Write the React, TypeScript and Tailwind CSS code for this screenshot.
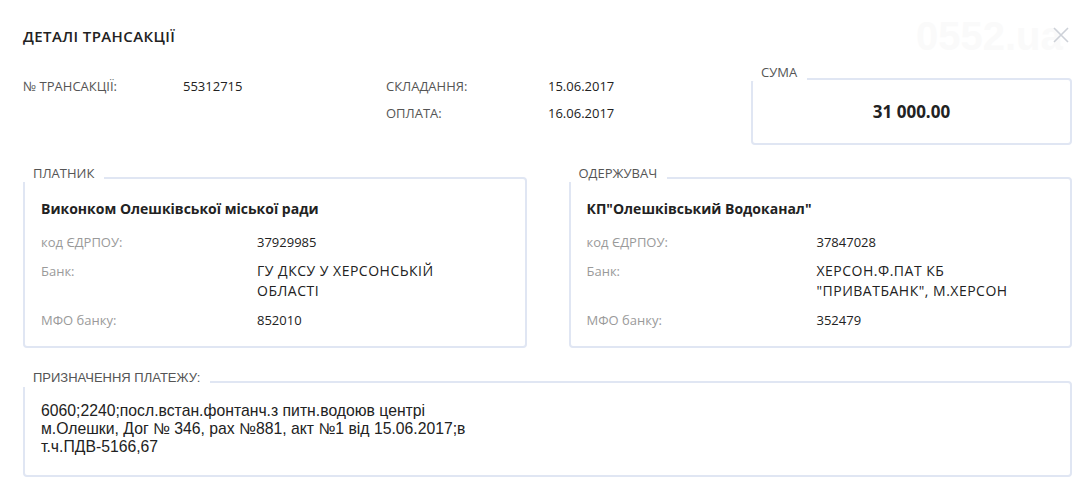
import React from "react";

const OS = { fontFamily: '"Open Sans", "Noto Sans", sans-serif' };
const AR = { fontFamily: '"Liberation Sans", Arial, sans-serif' };

function BoxLabel({ text, arial, top = "top-[-14px]" }: { text: string; arial?: boolean; top?: string }) {
  return (
    <div
      className={`absolute left-[-3px] ${top} h-[17px] bg-white pl-[11px] pr-[10px] text-[13px] leading-[16px] text-[#555]`}
      style={arial ? AR : OS}
    >
      {text}
    </div>
  );
}

type Row = { label: string; value: string[]; caps?: boolean };

function Party({ title, name, rows, col }: { title: string; name: string; rows: Row[]; col: string }) {
  return (
    <div className="relative flex-1 rounded-[4px] border-2 border-[#e0e6f3] pl-[16px] pr-4 pt-[20px] pb-[16px]">
      <BoxLabel text={title} />
      <div className="text-[14px] leading-[20px] font-bold text-[#222]" style={OS}>
        {name}
      </div>
      <div className="mt-[13px] flex flex-col gap-[9px]" style={OS}>
        {rows.map((r) => (
          <div key={r.label} className="flex text-[13px] leading-[20px]">
            <div className={`${col} shrink-0 text-[#9a9a9a]`}>{r.label}</div>
            <div className={r.caps ? "text-[14px] tracking-[0.5px] text-[#222]" : "text-[#222]"}>
              {r.value.map((v) => (
                <div key={v}>{v}</div>
              ))}
            </div>
          </div>
        ))}
      </div>
    </div>
  );
}

export default function App() {
  return (
    <div className="relative h-[502px] w-[1086px] overflow-hidden bg-white pl-[23px] pr-[14px]" style={OS}>
      {/* faint watermark */}
      <div
        className="pointer-events-none absolute left-[916px] top-[14px] text-[40px] font-bold leading-[44px] text-[#fafafa]"
        style={AR}
      >
        0552.ua
      </div>

      <div className="relative flex items-start justify-between pt-[27px]">
        <div className="text-[15px] font-semibold leading-[18px] tracking-[0.4px] text-[#222]">ДЕТАЛІ ТРАНСАКЦІЇ</div>
        <button className="mr-[3px] mt-0 h-[16px] w-[16px]" aria-label="close">
          <svg width="16" height="16" viewBox="0 0 16 16" fill="none">
            <path d="M1 1 L15 15 M15 1 L1 15" stroke="#cdd1d8" strokeWidth="1.6" />
          </svg>
        </button>
      </div>

      <div className="relative mt-[31px] flex items-start justify-between">
        <div className="grid grid-cols-[160px_203px_162px_auto] gap-y-[7px] text-[13px] leading-[20px]">
          <div className="text-[#555]">№ ТРАНСАКЦІЇ:</div>
          <div className="text-[#222]">55312715</div>
          <div className="text-[#555]">СКЛАДАННЯ:</div>
          <div className="text-[#222]">15.06.2017</div>
          <div className="col-start-3 text-[#555]">ОПЛАТА:</div>
          <div className="col-start-4 text-[#222]">16.06.2017</div>
        </div>
        <div className="relative mt-[2px] flex h-[67px] w-[321px] items-center justify-center rounded-[4px] border-2 border-[#e0e6f3]">
          <BoxLabel text="СУМА" top="top-[-16px]" />
          <div className="text-[17px] font-bold leading-[20px] text-[#222]">31 000.00</div>
        </div>
      </div>

      <div className="mt-[32px] flex gap-[42px]">
        <Party
          title="ПЛАТНИК"
          name="Виконком Олешківської міської ради"
          col="w-[216px]"
          rows={[
            { label: "код ЄДРПОУ:", value: ["37929985"] },
            { label: "Банк:", value: ["ГУ ДКСУ У ХЕРСОНСЬКІЙ", "ОБЛАСТІ"], caps: true },
            { label: "МФО банку:", value: ["852010"] },
          ]}
        />
        <Party
          title="ОДЕРЖУВАЧ"
          name={'КП"Олешківський Водоканал"'}
          col="w-[230px]"
          rows={[
            { label: "код ЄДРПОУ:", value: ["37847028"] },
            { label: "Банк:", value: ["ХЕРСОН.Ф.ПАТ КБ", '"ПРИВАТБАНК", М.ХЕРСОН'], caps: true },
            { label: "МФО банку:", value: ["352479"] },
          ]}
        />
      </div>

      <div className="relative mt-[33px] rounded-[4px] border-2 border-[#e0e6f3] pl-[16px] pt-[19px] pb-[19px]">
        <BoxLabel text="ПРИЗНАЧЕННЯ ПЛАТЕЖУ:" arial top="top-[-13px]" />
        <div className="text-[15.75px] leading-[18px] text-[#222]" style={AR}>
          <div>6060;2240;посл.встан.фонтанч.з питн.водоюв центрі</div>
          <div>м.Олешки, Дог № 346, рах №881, акт №1 від 15.06.2017;в</div>
          <div>т.ч.ПДВ-5166,67</div>
        </div>
      </div>
    </div>
  );
}
